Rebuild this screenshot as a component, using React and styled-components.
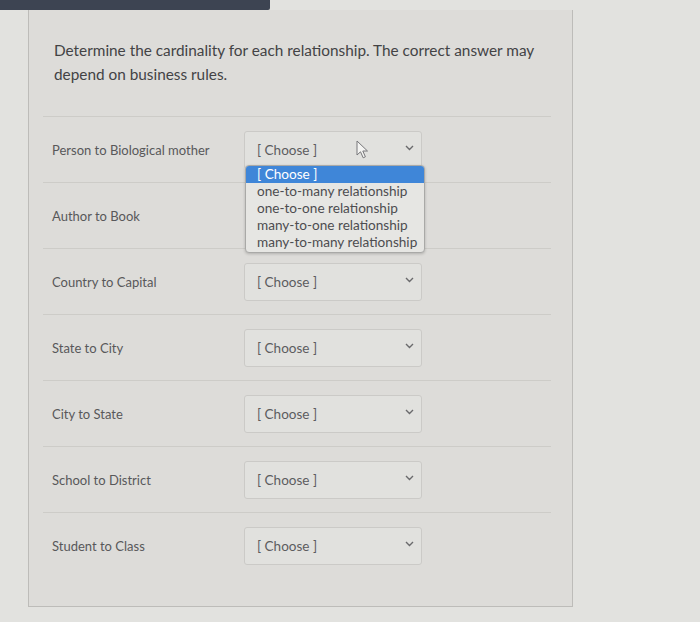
import React from 'react';
import styled, { createGlobalStyle } from 'styled-components';

const GlobalStyle = createGlobalStyle`
  html, body {
    margin: 0;
    padding: 0;
    background: #e2e2df;
    font-family: Lato, "Open Sans", sans-serif;
  }
`;

const Page = styled.div`
  width: 700px;
  height: 622px;
  overflow: hidden;
`;

const TopBar = styled.div`
  width: 270px;
  height: 10px;
  background: #3d4452;
  border-bottom-right-radius: 2px;
`;

const Panel = styled.div`
  margin-left: 28px;
  width: 543px;
  background: #dddcd9;
  border: 1px solid #bdbcb9;
  border-top: none;
  padding: 28px 0 27px;
`;

const Question = styled.p`
  margin: 0 18px 30px 25px;
  font-size: 15.35px;
  line-height: 24px;
  color: #434345;
`;

const Rows = styled.div`
  margin: 0 21px 0 14px;
  border-top: 1px solid #cdccc8;
`;

const Row = styled.div`
  display: grid;
  grid-template-columns: 201px 178px;
  align-items: center;
  height: 66px;
  box-sizing: border-box;
  padding-top: 14px;
  padding-bottom: 14px;
  border-bottom: ${({ last }) => (last ? 'none' : '1px solid #cdccc8')};
`;

const Label = styled.div`
  padding-left: 9px;
  font-size: 13px;
  color: #58585a;
`;

const SelectWrap = styled.div`
  position: relative;
  height: 38px;
`;

const SelectBox = styled.div`
  display: flex;
  align-items: center;
  justify-content: space-between;
  height: 38px;
  box-sizing: border-box;
  padding: 0 7px 0 12px;
  background: #e1e1de;
  border: 1px solid #cbcac7;
  border-radius: 3px;
  font-size: 13.5px;
  color: #5c5c5e;
  visibility: ${({ covered }) => (covered ? 'hidden' : 'visible')};
`;

const Chevron = styled.svg`
  width: 9px;
  height: 6px;
  margin-top: -4px;
`;

const Cursor = styled.svg`
  position: absolute;
  left: 112px;
  top: 9px;
  width: 13px;
  height: 19px;
`;

const Options = styled.ul`
  position: absolute;
  left: 1px;
  top: 34px;
  width: 178px;
  margin: 0;
  padding: 0 0 1px;
  list-style: none;
  background: #e6e6e3;
  border: 1px solid #a9a9a7;
  border-radius: 4px;
  box-shadow: 0 1px 3px rgba(0, 0, 0, 0.2);
  overflow: hidden;
  z-index: 2;
`;

const Option = styled.li`
  padding-left: 11px;
  font-size: 13.6px;
  line-height: 17px;
  white-space: nowrap;
  color: ${({ active }) => (active ? '#ffffff' : '#4d4d50')};
  background: ${({ active }) => (active ? '#3f86d8' : 'transparent')};
`;

const relationships = [
  'Person to Biological mother',
  'Author to Book',
  'Country to Capital',
  'State to City',
  'City to State',
  'School to District',
  'Student to Class',
];

const choices = [
  '[ Choose ]',
  'one-to-many relationship',
  'one-to-one relationship',
  'many-to-one relationship',
  'many-to-many relationship',
];

const Select = ({ open, covered }) => (
  <SelectWrap>
    <SelectBox covered={covered}>
      <span>[ Choose ]</span>
      <Chevron viewBox="0 0 9 6">
        <polyline points="1,1 4.5,4.5 8,1" fill="none" stroke="#6a6a6c" strokeWidth="1.4" />
      </Chevron>
    </SelectBox>
    {open && (
      <>
        <Cursor viewBox="0 0 13 19">
          <path
            d="M1 1 L1 15 L4.5 11.8 L7.2 17.8 L9.4 16.8 L6.8 11 L11.5 11 Z"
            fill="#f4f4f2"
            stroke="#77777a"
            strokeWidth="1"
            strokeLinejoin="round"
          />
        </Cursor>
        <Options>
          {choices.map((c, i) => (
            <Option key={c} active={i === 0}>{c}</Option>
          ))}
        </Options>
      </>
    )}
  </SelectWrap>
);

export default function App() {
  return (
    <Page>
      <GlobalStyle />
      <TopBar />
      <Panel>
        <Question>
          Determine the cardinality for each relationship. The correct answer may
          depend on business rules.
        </Question>
        <Rows>
          {relationships.map((r, i) => (
            <Row key={r} last={i === relationships.length - 1}>
              <Label>{r}</Label>
              <Select open={i === 0} covered={i === 1} />
            </Row>
          ))}
        </Rows>
      </Panel>
    </Page>
  );
}
